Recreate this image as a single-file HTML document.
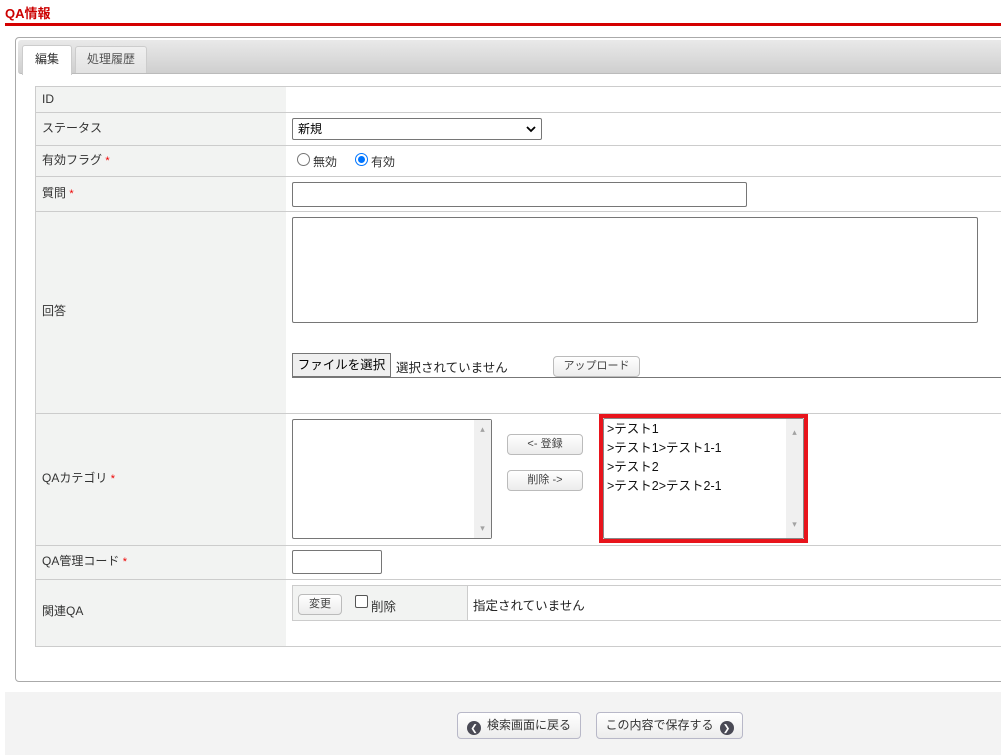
<!DOCTYPE html>
<html><head><meta charset="utf-8"><style>
*{box-sizing:border-box;margin:0;padding:0}
body{width:1001px;height:755px;overflow:hidden;background:#fff;position:relative;font-family:"Liberation Sans","Noto Sans CJK JP",sans-serif;font-size:12px;color:#333}
.a{position:absolute}
.lbl{position:absolute;left:35px;width:252px;background:#f2f3f2;border:1px solid #ccc;border-right:1px solid #ccc;padding-left:6px}
.val{position:absolute;left:286px;right:-2px;border:1px solid #ccc;border-left:none;background:#fff}
.req{color:#e00;font-size:11px}
.btn{position:absolute;border:1px solid #bbb;border-radius:4px;background:linear-gradient(#fff,#ececec);text-align:center;font-size:11px;color:#444}
.box{position:absolute;border:1px solid #767676;border-radius:2px;background:#fff}
.sb{position:absolute;right:0;top:0;bottom:0;width:17px;background:#f0f0f0;color:#a3a3a3;font-size:9px;text-align:center}
</style></head><body>
<div class="a" style="left:5px;top:3px;color:#c00;font-weight:bold;font-size:13px">QA情報</div>
<div class="a" style="left:5px;top:23px;width:996px;height:3px;background:#d40000"></div>

<div class="a" style="left:15px;top:37px;width:1000px;height:645px;border:1px solid #aaa;border-radius:4px"></div>
<div class="a" style="left:18px;top:40px;width:990px;height:34px;background:linear-gradient(#e9e9e9,#cfcfcf);border-radius:3px;border-bottom:1px solid #bbb"></div>
<div class="a" style="left:22px;top:45px;width:50px;height:30px;background:#fff;border:1px solid #ccc;border-bottom:none;border-radius:3px 3px 0 0;text-align:center;line-height:26px;font-size:12px;color:#333">編集</div>
<div class="a" style="left:75px;top:46px;width:72px;height:27px;background:linear-gradient(#f0f0f0,#e2e2e2);border:1px solid #ccc;border-bottom:none;border-radius:3px 3px 0 0;text-align:center;line-height:25px;color:#555">処理履歴</div>

<div class="lbl" style="top:86px;height:27px;line-height:24px">ID</div><div class="val" style="top:86px;height:27px"></div>
<div class="lbl" style="top:112px;height:34px;line-height:30px">ステータス</div><div class="val" style="top:112px;height:34px"></div>
<div class="lbl" style="top:145px;height:32px;line-height:28px">有効フラグ <span class="req">*</span></div><div class="val" style="top:145px;height:32px"></div>
<div class="lbl" style="top:176px;height:36px;line-height:32px">質問 <span class="req">*</span></div><div class="val" style="top:176px;height:36px"></div>
<div class="lbl" style="top:211px;height:203px;line-height:198px">回答</div><div class="val" style="top:211px;height:203px"></div>
<div class="lbl" style="top:413px;height:133px;line-height:128px">QAカテゴリ <span class="req">*</span></div><div class="val" style="top:413px;height:133px"></div>
<div class="lbl" style="top:545px;height:35px;line-height:31px">QA管理コード <span class="req">*</span></div><div class="val" style="top:545px;height:35px"></div>
<div class="lbl" style="top:579px;height:68px;line-height:62px">関連QA</div><div class="val" style="top:579px;height:68px"></div>

<div class="box" style="left:292px;top:118px;width:250px;height:22px;padding-left:5px;line-height:20px;color:#000">新規<svg class="a" style="right:5px;top:7px" width="10" height="7"><path d="M1 1l4 4 4-4" stroke="#000" stroke-width="1.8" fill="none"/></svg></div>

<div class="a" style="left:297px;top:153px;width:13px;height:13px;border:1px solid #767676;border-radius:50%"></div>
<div class="a" style="left:313px;top:153px;color:#333">無効</div>
<div class="a" style="left:355px;top:153px;width:13px;height:13px;border:1.5px solid #0075ff;border-radius:50%;padding:2px"><div style="width:100%;height:100%;background:#0075ff;border-radius:50%"></div></div>
<div class="a" style="left:371px;top:153px;color:#333">有効</div>

<div class="box" style="left:292px;top:182px;width:455px;height:25px"></div>
<div class="box" style="left:292px;top:217px;width:686px;height:106px"></div>

<div class="a" style="left:292px;top:353px;width:99px;height:24px;border:1px solid #767676;background:#efefef;text-align:center;line-height:22px;font-size:12.5px;color:#000">ファイルを選択</div>
<div class="a" style="left:396px;top:357px;font-size:12.5px;color:#222">選択されていません</div>
<div class="btn" style="left:553px;top:356px;width:87px;height:21px;line-height:19px">アップロード</div>
<div class="a" style="left:292px;top:377px;width:710px;height:1px;background:#777"></div>

<div class="box" style="left:292px;top:419px;width:200px;height:120px"><div class="sb" style="padding-top:4px">▴<div style="position:absolute;bottom:4px;width:100%">▾</div></div></div>
<div class="btn" style="left:507px;top:434px;width:76px;height:21px;line-height:19px">&lt;- 登録</div>
<div class="btn" style="left:507px;top:470px;width:76px;height:21px;line-height:19px">削除 -&gt;</div>

<div class="a" style="left:599px;top:414px;width:209px;height:129px;border:4px solid #e8141c"></div>
<div class="box" style="left:603px;top:418px;width:201px;height:121px;border-color:#888;padding:1px 0 0 3px;font-size:12.5px;line-height:19px;color:#111">&gt;テスト1<br>&gt;テスト1&gt;テスト1-1<br>&gt;テスト2<br>&gt;テスト2&gt;テスト2-1<div class="sb" style="padding-top:4px">▴<div style="position:absolute;bottom:4px;width:100%">▾</div></div></div>

<div class="box" style="left:292px;top:550px;width:90px;height:24px"></div>

<div class="a" style="left:292px;top:585px;width:176px;height:36px;background:#f2f3f2;border:1px solid #ccc"></div>
<div class="a" style="left:467px;top:585px;width:540px;height:36px;border:1px solid #ccc;border-left:none;padding:9px 0 0 6px;font-size:12.5px;color:#222">指定されていません</div>
<div class="btn" style="left:298px;top:594px;width:44px;height:21px;line-height:19px">変更</div>
<div class="a" style="left:355px;top:595px;width:13px;height:13px;border:1px solid #555;border-radius:2px;background:#fff"></div>
<div class="a" style="left:371px;top:596px;font-size:12.5px">削除</div>

<div class="a" style="left:5px;top:692px;width:996px;height:63px;background:#f3f3f3"></div>
<div class="btn" style="left:457px;top:712px;width:124px;height:27px;line-height:25px;font-size:12px;color:#333;border-color:#b8b8c8"><span style="display:inline-block;width:14px;height:14px;border-radius:50%;background:#4a4a55;color:#fff;font-size:9px;line-height:14px;vertical-align:-2px;margin-right:6px">❮</span>検索画面に戻る</div>
<div class="btn" style="left:596px;top:712px;width:147px;height:27px;line-height:25px;font-size:12px;color:#333;border-color:#b8b8c8">この内容で保存する<span style="display:inline-block;width:14px;height:14px;border-radius:50%;background:#4a4a55;color:#fff;font-size:9px;line-height:14px;vertical-align:-2px;margin-left:6px">❯</span></div>
</body></html>
